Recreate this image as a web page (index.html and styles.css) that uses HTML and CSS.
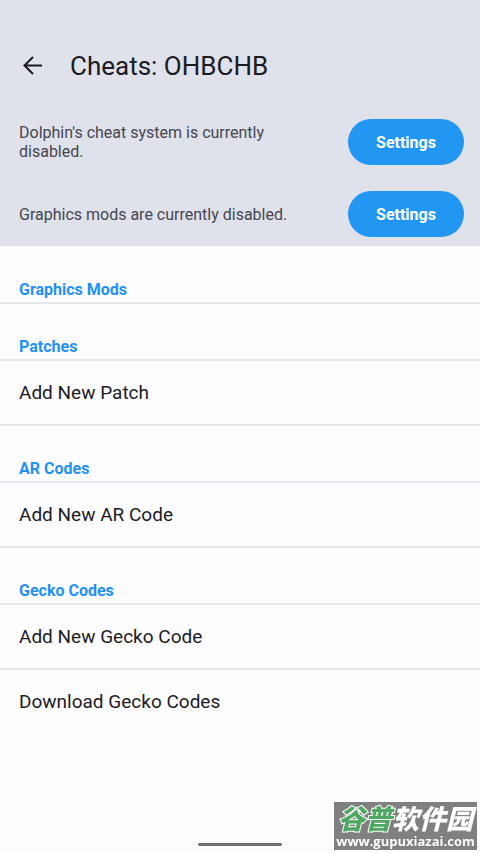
FILE: index.html
```html
<!DOCTYPE html>
<html lang="en">
<head>
<meta charset="utf-8">
<meta name="viewport" content="width=device-width, initial-scale=1">
<title>Cheats</title>
<link rel="stylesheet" href="styles.css">
</head>
<body>
<header class="header">
  <div class="toolbar">
    <button class="back" type="button" aria-label="Back">
      <svg viewBox="0 0 20 20" width="20" height="20" fill="none" stroke="currentColor" stroke-width="2"><path d="M19 9.500H2M10 1 1.500 9.500l8.500 8.500"/></svg>
    </button>
    <h1 class="title">Cheats: OHBCHB</h1>
  </div>
  <div class="notices">
    <div class="notice">
      <p class="notice-text">Dolphin's cheat system is currently disabled.</p>
      <button class="settings" type="button">Settings</button>
    </div>
    <div class="notice">
      <p class="notice-text">Graphics mods are currently disabled.</p>
      <button class="settings" type="button">Settings</button>
    </div>
  </div>
</header>
<main class="list">
  <h2 class="category">Graphics Mods</h2>
  <h2 class="category">Patches</h2>
  <button class="item" type="button">Add New Patch</button>
  <h2 class="category">AR Codes</h2>
  <button class="item" type="button">Add New AR Code</button>
  <h2 class="category">Gecko Codes</h2>
  <button class="item" type="button">Add New Gecko Code</button>
  <button class="item" type="button">Download Gecko Codes</button>
</main>
<div class="nav-handle"></div>
<div class="watermark">
  <div class="mark-name"><span class="mark-green">谷普</span>软件园</div>
  <div class="mark-url">www.gupuxiazai.com</div>
</div>
</body>
</html>
```
FILE: styles.css
```css
* {
  box-sizing: border-box;
}

body {
  margin: 0;
  min-height: 100vh;
  display: flex;
  flex-direction: column;
  background: #fdfdff;
  color: #1b1b1f;
  font-family: Roboto, "Liberation Sans", sans-serif;
}

h1, h2, p {
  margin: 0;
}

button {
  border: 0;
  font-family: inherit;
  color: inherit;
}

.header {
  padding: 26px 16px 9px 19px;
  background: #dfe1eb;
}

.toolbar {
  display: flex;
  align-items: center;
  gap: 23px;
  height: 80px;
}

.back {
  display: flex;
  padding: 4px;
  background: none;
}

.title {
  font-size: 26px;
  font-weight: 400;
  line-height: 32px;
}

.notices {
  display: flex;
  flex-direction: column;
  gap: 26px;
  padding-top: 13px;
}

.notice {
  display: flex;
  align-items: center;
  justify-content: space-between;
  gap: 48px;
}

.notice-text {
  color: #46464f;
  font-size: 16px;
  line-height: 19px;
}

.settings {
  flex: none;
  width: 116px;
  height: 46px;
  border-radius: 23px;
  background: #2196f3;
  color: #fff;
  font-size: 16px;
  font-weight: 700;
}

.list {
  display: flex;
  flex-direction: column;
  padding-top: 1px;
}

.category {
  height: 57px;
  padding: 33px 19px 0;
  border-bottom: 2px solid #e6e7ef;
  color: #1f90f5;
  font-size: 16px;
  font-weight: 700;
  line-height: 20px;
}

.item {
  height: 65px;
  padding: 0 19px;
  border-bottom: 2px solid #e6e7ef;
  background: none;
  font-size: 19px;
  text-align: left;
}

.item:last-child {
  height: 62px;
  border-bottom: 0;
}

.nav-handle {
  width: 84px;
  height: 3px;
  margin: auto auto 7px;
  border-radius: 2px;
  background: #707072;
}

.watermark {
  position: fixed;
  right: 3px;
  bottom: 3px;
  width: 143px;
  height: 48px;
  background: #808080;
  color: #fff;
  text-align: center;
  white-space: nowrap;
}

.mark-name {
  font-family: "Noto Sans CJK SC", sans-serif;
  font-size: 27px;
  font-style: italic;
  font-weight: 900;
  line-height: 32px;
}

.mark-green {
  color: #4fa862;
  -webkit-text-stroke: 2px #fff;
  paint-order: stroke fill;
}

.mark-url {
  font-family: "Open Sans", sans-serif;
  font-size: 13px;
  font-weight: 700;
  line-height: 14px;
}
```
